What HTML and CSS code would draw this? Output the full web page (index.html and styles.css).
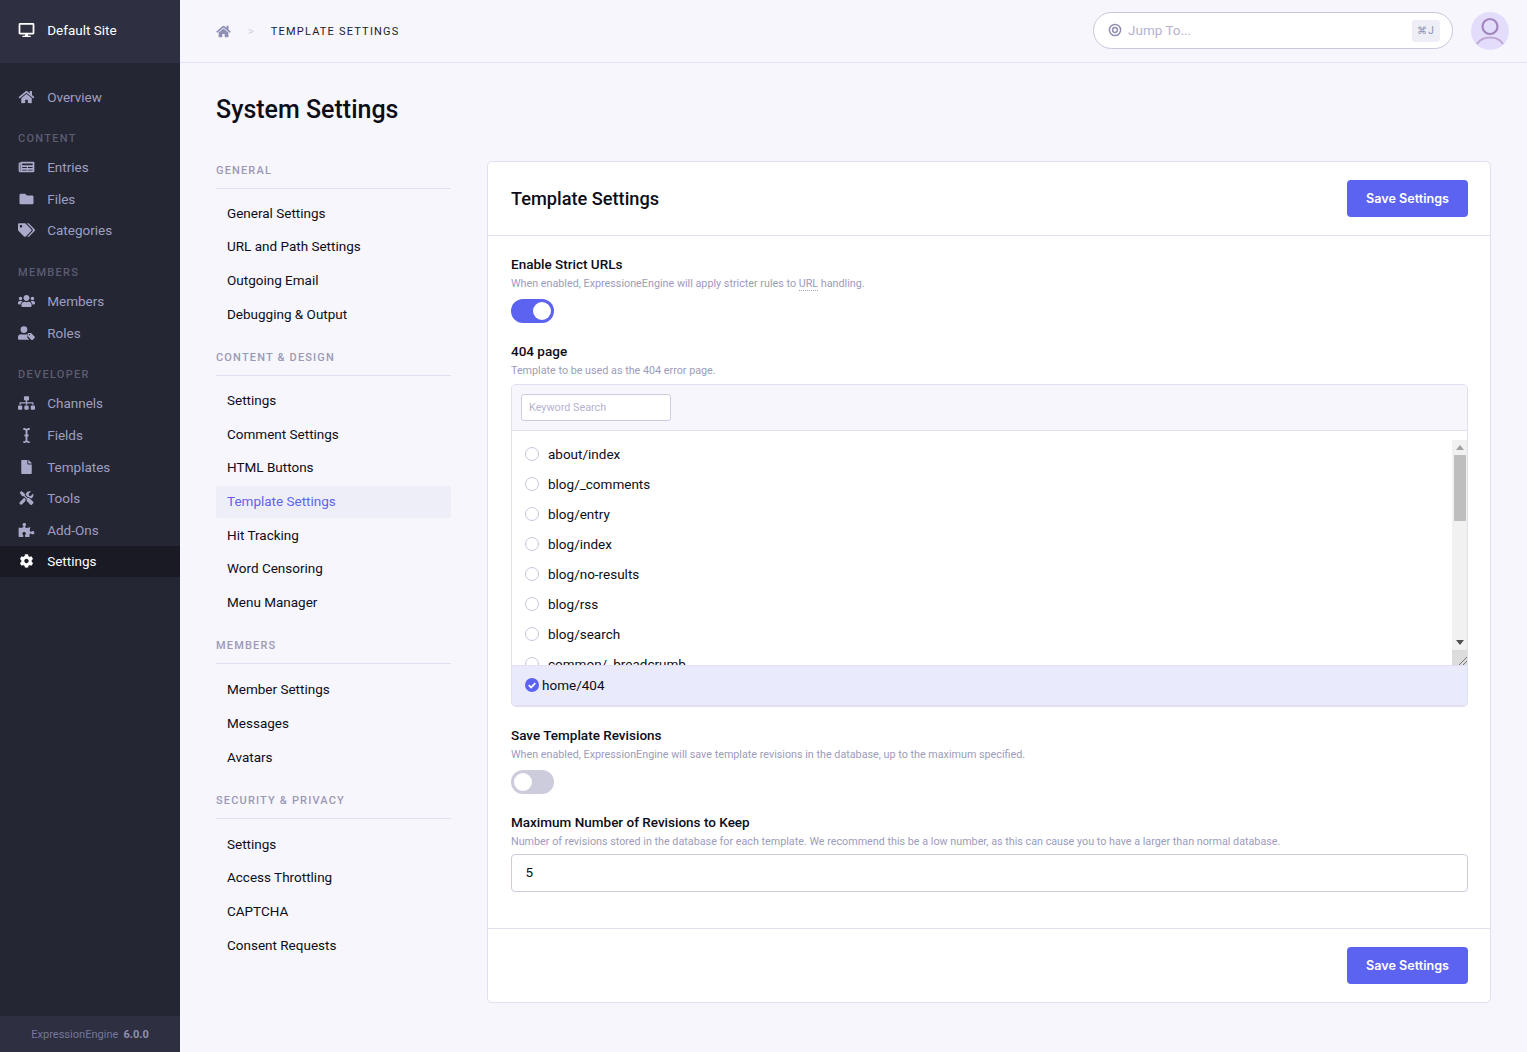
FILE: index.html
```html
<!DOCTYPE html>
<html lang="en">
<head>
<meta charset="UTF-8" />
<meta name="viewport" content="width=device-width, initial-scale=1" />
<title>System Settings</title>
<link rel="stylesheet" href="styles.css">
</head>
<body>

<svg class="sprites" aria-hidden="true">
  <symbol id="i-home" viewBox="0 0 576 512"><path d="M280.37 148.26L96 300.11V464a16 16 0 0 0 16 16l112.06-.29a16 16 0 0 0 15.92-16V368a16 16 0 0 1 16-16h64a16 16 0 0 1 16 16v95.64a16 16 0 0 0 16 16.05L464 480a16 16 0 0 0 16-16V300L295.67 148.26a12.19 12.19 0 0 0-15.3 0zM571.6 251.47L488 182.56V44.05a12 12 0 0 0-12-12h-56a12 12 0 0 0-12 12v72.61L318.47 43a48 48 0 0 0-61 0L4.34 251.47a12 12 0 0 0-1.6 16.9l25.5 31A12 12 0 0 0 45.15 301l235.22-193.74a12.19 12.19 0 0 1 15.3 0L530.9 301a12 12 0 0 0 16.9-1.6l25.5-31a12 12 0 0 0-1.7-16.93z"/></symbol>
  <symbol id="i-desktop" viewBox="0 0 576 512"><path d="M528 0H48C21.5 0 0 21.5 0 48v320c0 26.5 21.5 48 48 48h192l-16 48h-72c-13.3 0-24 10.7-24 24s10.7 24 24 24h272c13.3 0 24-10.7 24-24s-10.7-24-24-24h-72l-16-48h192c26.5 0 48-21.5 48-48V48c0-26.5-21.5-48-48-48zm-16 352H64V64h448v288z"/></symbol>
  <symbol id="i-entries" viewBox="0 0 576 512"><path fill-rule="evenodd" d="M552 64H88c-13.3 0-24 10.7-24 24v8H24c-13.3 0-24 10.7-24 24v272c0 30.900 25.100 56 56 56h472c26.500 0 48-21.500 48-48V88c0-13.300-10.700-24-24-24zM56 400a8 8 0 0 1-8-8V144h16v248a8 8 0 0 1-8 8zm236-16H140c-6.600 0-12-5.400-12-12v-8c0-6.600 5.400-12 12-12h152c6.600 0 12 5.400 12 12v8c0 6.600-5.400 12-12 12zm208 0H348c-6.600 0-12-5.400-12-12v-8c0-6.600 5.400-12 12-12h152c6.600 0 12 5.400 12 12v8c0 6.600-5.400 12-12 12zM292 288H140c-6.600 0-12-5.400-12-12v-8c0-6.600 5.400-12 12-12h152c6.600 0 12 5.400 12 12v8c0 6.600-5.400 12-12 12zm208 0H348c-6.600 0-12-5.400-12-12v-8c0-6.600 5.400-12 12-12h152c6.600 0 12 5.400 12 12v8c0 6.600-5.400 12-12 12zm0-96H140c-6.600 0-12-5.400-12-12v-40c0-6.600 5.400-12 12-12h360c6.600 0 12 5.400 12 12v40c0 6.600-5.400 12-12 12z"/></symbol>
  <symbol id="i-folder" viewBox="0 0 512 512"><path d="M464 128H272l-64-64H48C21.49 64 0 85.49 0 112v288c0 26.51 21.49 48 48 48h416c26.51 0 48-21.49 48-48V176c0-26.51-21.49-48-48-48z"/></symbol>
  <symbol id="i-tags" viewBox="0 0 640 512"><path d="M497.941 225.941L286.059 14.059A48 48 0 0 0 252.118 0H48C21.49 0 0 21.49 0 48v204.118a48 48 0 0 0 14.059 33.941l211.882 211.882c18.744 18.745 49.136 18.746 67.882 0l204.118-204.118c18.745-18.745 18.745-49.137 0-67.882zM112 160c-26.51 0-48-21.49-48-48s21.49-48 48-48 48 21.49 48 48-21.49 48-48 48zm513.941 133.823L421.823 497.941c-18.745 18.745-49.137 18.745-67.882 0l-.36-.36L527.64 323.522c16.999-16.999 26.36-39.6 26.36-63.64s-9.362-46.641-26.36-63.64L331.397 0h48.721a48 48 0 0 1 33.941 14.059l211.882 211.882c18.745 18.745 18.745 49.137 0 67.882z"/></symbol>
  <symbol id="i-users" viewBox="0 0 640 512"><path d="M96 224c35.300 0 64-28.700 64-64s-28.700-64-64-64-64 28.700-64 64 28.700 64 64 64zm448 0c35.300 0 64-28.700 64-64s-28.700-64-64-64-64 28.700-64 64 28.700 64 64 64zm32 32h-64c-17.600 0-33.500 7.100-45.100 18.600 40.300 22.100 68.900 62 75.100 109.400h66c17.700 0 32-14.300 32-32v-32c0-35.300-28.700-64-64-64zm-256 0c61.900 0 112-50.100 112-112S381.900 32 320 32 208 82.100 208 144s50.100 112 112 112zm76.800 32h-8.300c-20.800 10-43.900 16-68.500 16s-47.600-6-68.500-16h-8.300C179.600 288 128 339.600 128 403.200V432c0 26.500 21.500 48 48 48h288c26.500 0 48-21.500 48-48v-28.800c0-63.600-51.600-115.200-115.200-115.200zm-223.700-13.400C161.500 263.100 145.600 256 128 256H64c-35.300 0-64 28.700-64 64v32c0 17.700 14.300 32 32 32h65.900c6.300-47.400 34.900-87.300 75.200-109.400z"/></symbol>
  <symbol id="i-usertag" viewBox="0 0 640 512"><path d="M224 256a128 128 0 1 0 0-256 128 128 0 0 0 0 256zM352 340c0-12 5-24 13-33l4-4c-11-2-22-3-33-3h-17c-22 10-47 16-95 16s-73-6-95-16h-17C50 300 0 350 0 412v52c0 26.500 21.500 48 48 48h378l-61-61c-8-9-13-20-13-33V340zM630 393L502 265c-6-6-14-9-23-9H393c-13 0-25 11-25 25v86c0 9 3 17 9 23l128 128c12 12 33 12 45 0l80-80c12-12 12-33 0-45zM432 345a24 24 0 1 1 0-48 24 24 0 0 1 0 48z"/></symbol>
  <symbol id="i-sitemap" viewBox="0 0 640 512"><path d="M128 352H32c-17.700 0-32 14.300-32 32v96c0 17.700 14.300 32 32 32h96c17.700 0 32-14.300 32-32v-96c0-17.700-14.300-32-32-32zm-24-80h192v48h48v-48h192v48h48v-57.600c0-21.200-17.200-38.400-38.400-38.400H344v-64h40c17.700 0 32-14.300 32-32V32c0-17.700-14.300-32-32-32H256c-17.700 0-32 14.300-32 32v96c0 17.700 14.300 32 32 32h40v64H94.400C73.200 224 56 241.200 56 262.400V320h48v-48zm264 80h-96c-17.700 0-32 14.300-32 32v96c0 17.700 14.300 32 32 32h96c17.700 0 32-14.300 32-32v-96c0-17.700-14.300-32-32-32zm240 0h-96c-17.700 0-32 14.300-32 32v96c0 17.700 14.300 32 32 32h96c17.700 0 32-14.300 32-32v-96c0-17.700-14.300-32-32-32z"/></symbol>
  <symbol id="i-cursor" viewBox="0 0 256 512"><path d="M160 416c0 26 18 32 64 32 9 0 16 7 16 16v32c0 9-7 16-16 16-40 0-76-6-96-32-20 26-56 32-96 32-9 0-16-7-16-16v-32c0-9 7-16 16-16 46 0 64-6 64-32V288H72c-9 0-16-7-16-16v-32c0-9 7-16 16-16h24V96c0-26-18-32-64-32-9 0-16-7-16-16V16c0-9 7-16 16-16 40 0 76 6 96 32 20-26 56-32 96-32 9 0 16 7 16 16v32c0 9-7 16-16 16-46 0-64 6-64 32v128h24c9 0 16 7 16 16v32c0 9-7 16-16 16h-24v128z"/></symbol>
  <symbol id="i-file" viewBox="0 0 384 512"><path d="M224 136V0H24C10.700 0 0 10.700 0 24v464c0 13.300 10.700 24 24 24h336c13.300 0 24-10.700 24-24V160H248c-13.200 0-24-10.800-24-24zm160-14.100v6.100H256V0h6.100c6.400 0 12.500 2.500 17 7l97.900 98c4.500 4.500 7 10.600 7 16.900z"/></symbol>
  <symbol id="i-tools" viewBox="0 0 512 512"><path d="M502 396L386 280c-23-23-57-27-84-14L196 160V98L70 4 7 67l94 126h62l106 106c-13 27-9 61 14 84l116 116c15 15 38 15 52 0l51-51c14-15 14-38 0-52z"/><path d="M331 224c28 0 55 11 75 31l19 19c15-7 30-16 42-29 36-36 48-86 37-132-2-9-13-12-19-5l-74 74-68-11-11-68 74-74c7-7 3-18-6-20-46-11-96 1-132 37-28 28-41 64-40 100l82 82c7-2 14-4 21-4zM227 306l-57-57L17 402c-23 23-23 60 0 83s60 23 83 0l124-124c-8-18-7-37 3-55z"/></symbol>
  <symbol id="i-puzzle" viewBox="0 0 576 512"><path d="M519.442 288.651c-41.519 0-59.5 31.593-82.058 31.593C377.409 320.244 432 144 432 144s-196.288 80-196.288-3.297c0-35.827 36.288-46.250 36.288-85.985C272 19.216 243.885 0 210.539 0c-34.654 0-66.366 18.891-66.366 56.346 0 41.364 31.711 59.277 31.711 81.750C175.885 207.719 0 166.758 0 166.758v333.237s178.635 41.047 178.635-28.662c0-22.473-40-40.107-40-81.471 0-37.456 29.250-56.346 63.577-56.346 33.673 0 61.788 19.216 61.788 54.717 0 39.735-36.288 50.158-36.288 85.985 0 60.803 129.675 25.730 181.230 25.730 0 0-34.725-120.101 25.827-120.101 35.962 0 46.423 36.152 86.308 36.152C556.712 416 576 387.990 576 354.443c0-34.199-18.962-65.792-56.558-65.792z"/></symbol>
  <symbol id="i-cog" viewBox="0 0 512 512"><path d="M487.400 315.700l-42.600-24.600c4.300-23.200 4.300-47 0-70.200l42.600-24.600c4.900-2.800 7.100-8.600 5.500-14-11.100-35.600-30-67.800-54.700-94.600-3.800-4.100-10-5.100-14.800-2.300L380.800 110c-17.900-15.400-38.500-27.300-60.800-35.100V25.800c0-5.600-3.900-10.500-9.400-11.700-36.700-8.200-74.300-7.800-109.200 0-5.500 1.200-9.400 6.100-9.400 11.700V75c-22.200 7.900-42.800 19.800-60.800 35.100L88.700 85.500c-4.900-2.800-11-1.900-14.800 2.300-24.700 26.700-43.600 58.900-54.700 94.600-1.700 5.400.6 11.200 5.500 14L67.300 221c-4.300 23.200-4.300 47 0 70.200l-42.600 24.600c-4.900 2.800-7.100 8.600-5.500 14 11.100 35.600 30 67.800 54.700 94.600 3.800 4.100 10 5.100 14.800 2.300l42.600-24.600c17.900 15.400 38.500 27.300 60.800 35.100v49.200c0 5.600 3.900 10.500 9.400 11.700 36.700 8.200 74.300 7.800 109.200 0 5.500-1.200 9.400-6.100 9.400-11.700v-49.200c22.200-7.900 42.800-19.800 60.800-35.100l42.600 24.600c4.900 2.800 11 1.900 14.800-2.300 24.700-26.700 43.600-58.900 54.700-94.600 1.500-5.500-.7-11.300-5.600-14.100zM256 336c-44.100 0-80-35.900-80-80s35.900-80 80-80 80 35.900 80 80-35.900 80-80 80z"/></symbol>
</svg>

<div class="app">
  <aside class="sidebar">
    <div class="site-name">
      <svg class="ico"><use href="#i-desktop"/></svg>
      Default Site
    </div>
    <nav class="main-nav">
      <a class="main-link"><svg class="ico"><use href="#i-home"/></svg>Overview</a>
      <div class="main-head">Content</div>
      <a class="main-link"><svg class="ico"><use href="#i-entries"/></svg>Entries</a>
      <a class="main-link"><svg class="ico"><use href="#i-folder"/></svg>Files</a>
      <a class="main-link"><svg class="ico"><use href="#i-tags"/></svg>Categories</a>
      <div class="main-head">Members</div>
      <a class="main-link"><svg class="ico"><use href="#i-users"/></svg>Members</a>
      <a class="main-link"><svg class="ico"><use href="#i-usertag"/></svg>Roles</a>
      <div class="main-head main-head-dev">Developer</div>
      <a class="main-link"><svg class="ico"><use href="#i-sitemap"/></svg>Channels</a>
      <a class="main-link"><svg class="ico ico-thin"><use href="#i-cursor"/></svg>Fields</a>
      <a class="main-link"><svg class="ico"><use href="#i-file"/></svg>Templates</a>
      <a class="main-link"><svg class="ico"><use href="#i-tools"/></svg>Tools</a>
      <a class="main-link"><svg class="ico"><use href="#i-puzzle"/></svg>Add-Ons</a>
      <a class="main-link active"><svg class="ico"><use href="#i-cog"/></svg>Settings</a>
    </nav>
    <div class="version">ExpressionEngine <b>6.0.0</b></div>
  </aside>

  <div class="main">
    <header class="topbar">
      <div class="crumbs">
        <svg class="crumb-home"><use href="#i-home"/></svg>
        <span class="crumb-sep">&gt;</span>
        <span class="crumb-now">Template Settings</span>
      </div>
      <div class="jump">
        <svg class="jump-ico" viewBox="0 0 14 14"><circle cx="7" cy="7" r="5.6" fill="none" stroke="#8f8fb3" stroke-width="1.5"/><circle cx="7" cy="7" r="2.4" fill="none" stroke="#8f8fb3" stroke-width="1.5"/></svg>
        <span class="jump-text">Jump To...</span>
        <span class="jump-key">⌘J</span>
      </div>
      <svg class="avatar" viewBox="0 0 38 38">
        <circle cx="19" cy="19" r="19" fill="#e3dcfb"/>
        <circle cx="19" cy="14.500" r="7.500" fill="none" stroke="#a285bd" stroke-width="2.200"/>
        <path d="M6 32c3-5 8-6.500 13-6.500s10 1.500 13 6.500" fill="none" stroke="#bfa6d3" stroke-width="2.200"/>
      </svg>
    </header>

    <div class="page">
      <h1>System Settings</h1>
      <div class="columns">
        <nav class="sub-nav">
          <h3>General</h3>
          <ul>
            <li>General Settings</li>
            <li>URL and Path Settings</li>
            <li>Outgoing Email</li>
            <li>Debugging &amp; Output</li>
          </ul>
          <h3>Content &amp; Design</h3>
          <ul>
            <li>Settings</li>
            <li>Comment Settings</li>
            <li>HTML Buttons</li>
            <li class="current">Template Settings</li>
            <li>Hit Tracking</li>
            <li>Word Censoring</li>
            <li>Menu Manager</li>
          </ul>
          <h3>Members</h3>
          <ul class="low">
            <li>Member Settings</li>
            <li>Messages</li>
            <li>Avatars</li>
          </ul>
          <h3>Security &amp; Privacy</h3>
          <ul class="low">
            <li>Settings</li>
            <li>Access Throttling</li>
            <li>CAPTCHA</li>
            <li>Consent Requests</li>
          </ul>
        </nav>

        <section class="card">
          <div class="card-head">
            <h2>Template Settings</h2>
            <button class="btn">Save Settings</button>
          </div>
          <div class="card-body">
            <div class="field field-toggle">
              <label>Enable Strict URLs</label>
              <p>When enabled, ExpressioneEngine will apply stricter rules to <abbr>URL</abbr> handling.</p>
              <div class="toggle on"><span></span></div>
            </div>
            <div class="field field-picker">
              <label>404 page</label>
              <p>Template to be used as the 404 error page.</p>
              <div class="picker">
                <div class="picker-filter"><div class="search">Keyword Search</div></div>
                <div class="picker-list">
                  <div class="opt"><i></i>about/index</div>
                  <div class="opt"><i></i>blog/_comments</div>
                  <div class="opt"><i></i>blog/entry</div>
                  <div class="opt"><i></i>blog/index</div>
                  <div class="opt"><i></i>blog/no-results</div>
                  <div class="opt"><i></i>blog/rss</div>
                  <div class="opt"><i></i>blog/search</div>
                  <div class="opt"><i></i>common/_breadcrumb</div>
                  <div class="scrollbar">
                    <span class="scroll-btn"><i class="arrow-up"></i></span>
                    <span class="scroll-track"><span class="scroll-thumb"></span></span>
                    <span class="scroll-btn"><i class="arrow-down"></i></span>
                    <span class="scroll-grip"></span>
                  </div>
                </div>
                <div class="picker-chosen">
                  <svg class="tick" viewBox="0 0 14 14"><circle cx="7" cy="7" r="7" fill="#5d63f1"/><path d="M3.800 7.200l2.300 2.300 4.200-4.400" fill="none" stroke="#fff" stroke-width="1.700"/></svg>
                  home/404
                </div>
              </div>
            </div>
            <div class="field field-toggle">
              <label>Save Template Revisions</label>
              <p>When enabled, ExpressionEngine will save template revisions in the database, up to the maximum specified.</p>
              <div class="toggle"><span></span></div>
            </div>
            <div class="field">
              <label>Maximum Number of Revisions to Keep</label>
              <p>Number of revisions stored in the database for each template. We recommend this be a low number, as this can cause you to have a larger than normal database.</p>
              <div class="text-input">5</div>
            </div>
          </div>
          <div class="card-foot">
            <button class="btn">Save Settings</button>
          </div>
        </section>
      </div>
    </div>
  </div>
</div>

</body>
</html>
```

FILE: styles.css
```css
* {
  box-sizing: border-box;
}
html, body {
  margin: 0;
  height: 100%;
}
body {
  font-family: Roboto, "Liberation Sans", sans-serif;
  font-size: 13.500px;
  color: #0d0d19;
  background: #f6f6fc;
  overflow: hidden;
}
.sprites {
  display: none;
}
.app {
  display: flex;
  height: 1052px;
}

/* left dark bar */
.sidebar {
  width: 180px;
  flex: none;
  display: flex;
  flex-direction: column;
  background: #252633;
}
.site-name {
  height: 63px;
  padding: 0 18px 3px;
  display: flex;
  align-items: center;
  background: #2e2f40;
  color: #fff;
  font-size: 13.500px;
}
.site-name .ico {
  color: #fff;
}
.main-nav {
  flex: 1;
  padding-top: 17.750px;
}
.main-link {
  height: 31.600px;
  padding: 0 18px;
  display: flex;
  align-items: center;
  color: #9d9fc2;
  font-size: 13.500px;
}
.main-link.active {
  background: #191a24;
  color: #fff;
}
.ico {
  width: 17px;
  height: 14px;
  margin-right: 12.200px;
  flex: none;
  fill: currentColor;
  color: #a9a9c9;
}
.main-link.active .ico {
  color: #fff;
}
.ico-thin {
  height: 15px;
}
.main-head {
  padding: 0 18px;
  margin: 19px 0 5px;
  height: 15px;
  line-height: 15px;
  color: #5b5c72;
  font-size: 11px;
  font-weight: 500;
  letter-spacing: 1.300px;
  text-transform: uppercase;
}
.main-head-dev {
  margin-bottom: 5.300px;
}
.version {
  height: 36px;
  display: flex;
  align-items: center;
  justify-content: center;
  gap: 5px;
  background: #2e2f40;
  color: #74769b;
  font-size: 11.050px;
}
.version b {
  font-weight: 700;
  color: #8f90b3;
}

/* top bar */
.main {
  flex: 1;
  min-width: 0;
}
.topbar {
  height: 63px;
  padding: 0 18px 1px 36px;
  display: flex;
  align-items: center;
  border-bottom: 1px solid #e5e3f3;
}
.crumbs {
  flex: 1;
  display: flex;
  align-items: center;
  padding-top: 1px;
}
.crumb-home {
  width: 15px;
  height: 13px;
  fill: #8f8fb3;
}
.crumb-sep {
  margin: 0 17px 0 17px;
  color: #cdcde0;
  font-size: 11px;
}
.crumb-now {
  font-size: 11px;
  letter-spacing: 1.200px;
  text-transform: uppercase;
  color: #1c1c2e;
}
.jump {
  width: 360px;
  height: 37px;
  margin-right: 18px;
  padding: 0 12px 2px 14px;
  display: flex;
  align-items: center;
  background: #fff;
  border: 1px solid #c9c6de;
  border-radius: 19px;
}
.jump-ico {
  width: 14px;
  height: 14px;
  margin-right: 6px;
}
.jump-text {
  flex: 1;
  color: #b4b3cf;
  font-size: 13.500px;
}
.jump-key {
  width: 28px;
  height: 22px;
  margin-top: 2px;
  line-height: 22px;
  text-align: center;
  background: #eeeef6;
  border-radius: 3px;
  color: #8f8fb3;
  font-size: 10px;
  letter-spacing: 1px;
}
.avatar {
  width: 38px;
  height: 38px;
}

/* page */
.page {
  padding: 0 36px;
}
h1 {
  margin: 0;
  padding-top: 29px;
  height: 98px;
  font-size: 25px;
  line-height: 36px;
  font-weight: 500;
}
.columns {
  display: flex;
  gap: 36px;
  align-items: flex-start;
}
.sub-nav {
  width: 235px;
  flex: none;
}
.sub-nav h3 {
  margin: 0;
  height: 28px;
  padding-top: 2px;
  line-height: 15px;
  border-bottom: 1px solid #e1dff1;
  color: #9a9ab8;
  font-size: 11px;
  font-weight: 500;
  letter-spacing: 1.160px;
  text-transform: uppercase;
}
.sub-nav ul {
  list-style: none;
  margin: 0;
  padding: 7.800px 0 16.800px;
}
.sub-nav ul.low {
  padding-top: 8.800px;
}
.sub-nav li {
  height: 33.670px;
  line-height: 33.670px;
  padding: 0 11px;
  border-radius: 3px;
  color: #0d0d19;
}
.sub-nav li.current {
  height: 32px;
  line-height: 31px;
  margin: 0.830px 0;
  background: #eeeef8;
  color: #5d63f1;
}

/* card */
.card {
  width: 1004px;
  height: 842px;
  flex: none;
  display: flex;
  flex-direction: column;
  background: #fff;
  border: 1px solid #e1dff1;
  border-radius: 5px;
}
.card-head {
  height: 74px;
  padding: 0 22px 0 23px;
  display: flex;
  align-items: center;
  justify-content: space-between;
  border-bottom: 1px solid #e1dff1;
}
h2 {
  margin: 0;
  font-size: 18.200px;
  font-weight: 500;
}
.btn {
  width: 121px;
  height: 37px;
  padding: 0;
  border: 0;
  border-radius: 4px;
  background: #5d63f1;
  color: #fff;
  font-family: Inter, sans-serif;
  font-size: 12.600px;
  font-weight: 600;
}
.card-body {
  flex: 1;
  padding: 20px 22px 0 23px;
}
.card-foot {
  height: 74px;
  padding: 0 22px;
  display: flex;
  align-items: center;
  justify-content: flex-end;
  border-top: 1px solid #e1dff1;
}
.field label {
  display: block;
  height: 16px;
  line-height: 16px;
  font-size: 13.500px;
  font-weight: 500;
}
.field p {
  margin: 3px 0 0;
  height: 17px;
  line-height: 17px;
  color: #9c9cbb;
  font-size: 10.780px;
}
abbr {
  border-bottom: 1px dotted #9c9cbb;
}
.field-toggle {
  height: 87px;
}
.toggle {
  width: 43px;
  height: 24px;
  margin-top: 7px;
  padding: 3px;
  border-radius: 12px;
  background: #cdccdc;
}
.toggle span {
  display: block;
  width: 18px;
  height: 18px;
  border-radius: 50%;
  background: #fff;
}
.toggle.on {
  background: #5d63f1;
  padding-left: 22px;
}
.field-picker {
  height: 384px;
}
.picker {
  margin-top: 5px;
  border: 1px solid #e1dff1;
  border-bottom-width: 2px;
  border-radius: 5px;
  overflow: hidden;
}
.picker-filter {
  height: 46px;
  padding: 9px;
  background: #f6f6fc;
  border-bottom: 1px solid #e1dff1;
}
.search {
  width: 150px;
  height: 27px;
  line-height: 25px;
  padding: 0 7px;
  background: #fff;
  border: 1px solid #cdcbe0;
  border-radius: 3px;
  color: #b4b3cf;
  font-size: 10.800px;
}
.picker-list {
  position: relative;
  height: 234px;
  padding-top: 8px;
  overflow: hidden;
}

/* the list's scrollbar, lies over the rows */
.scrollbar {
  position: absolute;
  top: 9px;
  right: 0;
  bottom: 0;
  width: 15px;
  display: flex;
  flex-direction: column;
  background: #f1f1f1;
}
.scroll-btn {
  height: 15px;
  flex: none;
  display: flex;
  align-items: center;
  justify-content: center;
}
.arrow-up, .arrow-down {
  width: 0;
  height: 0;
  border-left: 4.500px solid transparent;
  border-right: 4.500px solid transparent;
}
.arrow-up {
  border-bottom: 5px solid #a3a3a3;
}
.arrow-down {
  border-top: 5px solid #505050;
}
.scroll-track {
  flex: 1;
}
.scroll-thumb {
  display: block;
  height: 66px;
  margin: 0 1px 0 2px;
  background: #bebebe;
}
.scroll-grip {
  height: 15px;
  flex: none;
  background: linear-gradient(135deg, #dcdcdc 72%, #777 72%, #777 76%, #dcdcdc 76%, #dcdcdc 86%, #777 86%, #777 90%, #dcdcdc 90%);
}
.opt {
  height: 30px;
  padding-left: 13px;
  display: flex;
  align-items: center;
}
.opt i {
  width: 14px;
  height: 14px;
  margin-right: 9px;
  border: 1px solid #c9c6de;
  border-radius: 50%;
  background: #fff;
}
.picker-chosen {
  height: 40px;
  padding: 0 0 1px 13px;
  display: flex;
  align-items: center;
  background: #e9eafc;
  border-top: 1px solid #e1dff1;
}
.tick {
  width: 14px;
  height: 14px;
  margin-right: 3px;
}
.text-input {
  height: 38px;
  line-height: 35px;
  margin-top: 4px;
  padding: 0 14px 0 13.500px;
  border: 1px solid #cdcbe0;
  border-radius: 4px;
}
```
